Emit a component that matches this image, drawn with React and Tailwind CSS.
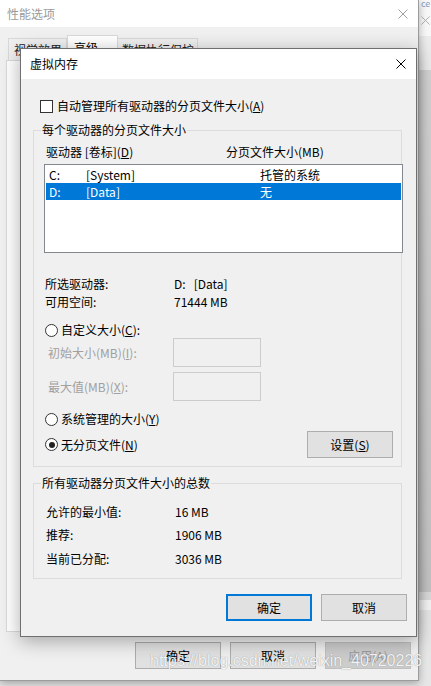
import React from "react";

const XIcon = ({ color, size = 10 }) => (
  <svg width={size} height={size} viewBox="0 0 10 10" className="block">
    <path d="M0.5 0.5L9.5 9.5M9.5 0.5L0.5 9.5" stroke={color} strokeWidth="1" fill="none" />
  </svg>
);

const Radio = ({ checked }) => (
  <div className="w-[13px] h-[13px] rounded-full border border-[#333] bg-white flex items-center justify-center shrink-0">
    {checked && <div className="w-[6px] h-[6px] rounded-full bg-[#222]" />}
  </div>
);

const Btn = ({ children, w = "w-[86px]", focus, disabled }) => (
  <div
    className={
      "h-[27px] flex items-center justify-center shrink-0 " +
      w +
      (focus
        ? " border-2 border-[#0078d7] bg-[#e1e1e1] text-black"
        : disabled
        ? " border border-[#bfbfbf] bg-[#cccccc] text-[#9a9a9a]"
        : " border border-[#adadad] bg-[#e1e1e1] text-black")
    }
  >
    {children}
  </div>
);

export default function App() {
  return (
    <div className="relative w-[431px] h-[686px] overflow-hidden bg-[#e4e4e4] font-['Noto_Sans_CJK_SC',sans-serif] text-[12px] leading-[16px] text-black">
      {/* window behind, right strip */}
      <div className="absolute left-[419px] top-0 w-[12px] h-[686px] flex flex-col">
        <div className="h-[36px] bg-[#f7f7f7] flex flex-col pl-[2px]">
          <div className="h-[12px] text-[9px] leading-[8px] text-[#8aa0c0] overflow-hidden">ce</div>
          <div className="pt-[4px]">
            <XIcon color="#a8a8a8" size={9} />
          </div>
        </div>
        <div className="h-[34px] bg-[#ebebeb]" />
        <div className="h-[522px] bg-gradient-to-b from-[#d2d2d2] to-[#c4c4c4]" />
        <div className="h-[8px] bg-[#dadada]" />
        <div className="h-[10px] bg-[#f4f4f4]" />
        <div className="flex-1 bg-[#e6e6e6]" />
      </div>

      {/* outer window: 性能选项 */}
      <div className="absolute z-0 left-0 top-0 w-[419px] h-[681px] bg-[#f0f0f0] border-r border-b border-[#9c9c9c] shadow-[0_2px_8px_rgba(0,0,0,0.3)] flex flex-col">
        <div className="h-[27px] bg-white flex items-center justify-between pl-[7px] pr-[10px] text-[#9a9a9a] shrink-0">
          <span>性能选项</span>
          <XIcon color="#a0a0a0" />
        </div>
        <div className="flex flex-col pl-[6px] pr-[6px]">
          <div className="h-[33px] flex items-end pl-[2px] pt-[8px]">
            <div className="h-[22px] w-[59px] border border-b-0 border-[#d9d9d9] bg-[#f0f0f0] pl-[5px] pt-[3px] text-[#222]">视觉效果</div>
            <div className="h-[26px] w-[51px] border border-b-0 border-[#d9d9d9] bg-white pl-[6px] pt-[4px] -mb-[1px] relative z-10">高级</div>
            <div className="h-[22px] w-[80px] border border-b-0 border-l-0 border-[#d9d9d9] bg-[#f0f0f0] pl-[4px] pt-[3px] text-[#222]">数据执行保护</div>
          </div>
          <div className="h-[572px] bg-white border border-[#d9d9d9]" />
          <div className="flex justify-end gap-[9px] mt-[10px] pr-[1px]">
            <Btn w="w-[86px]">确定</Btn>
            <Btn w="w-[86px]">取消</Btn>
            <Btn w="w-[86px]" disabled>
              应用(A)
            </Btn>
          </div>
        </div>
      </div>

      {/* inner dialog: 虚拟内存 */}
      <div className="absolute z-20 left-[20px] top-[48px] w-[397px] h-[589px] border border-[#6f6f6f] bg-[#f0f0f0] shadow-[0_4px_18px_rgba(0,0,0,0.32)] flex flex-col">
        <div className="h-[30px] bg-white flex items-center justify-between pl-[9px] pr-[10px] shrink-0">
          <span className="text-[12px]">虚拟内存</span>
          <XIcon color="#000" />
        </div>
        <div className="flex flex-col pl-[12px] pr-[9px]">
          {/* checkbox */}
          <div className="mt-[19px] h-[16px] flex items-center pl-[7px] gap-[4px]">
            <div className="w-[13px] h-[13px] border border-[#333] bg-white" />
            <span>
              自动管理所有驱动器的分页文件大小(<u>A</u>)
            </span>
          </div>

          {/* group 1 */}
          <div className="relative mt-[16px] w-[369px] h-[337px] border border-[#dcdcdc] flex flex-col">
            <span className="absolute -top-[9px] left-[7px] bg-[#f0f0f0] px-[1px]">每个驱动器的分页文件大小</span>
            <div className="mt-[13px] h-[16px] flex pl-[12px]">
              <span className="w-[180px]">
                驱动器 [卷标](<u>D</u>)
              </span>
              <span>分页文件大小(MB)</span>
            </div>
            <div className="mt-[4px] ml-[10px] w-[359px] h-[89px] border border-[#828790] bg-white p-[1px] shrink-0">
              <div className="h-[17px] flex items-center pl-[3px]">
                <span className="w-[37px]">C:</span>
                <span className="w-[174px]">[System]</span>
                <span>托管的系统</span>
              </div>
              <div className="h-[17px] flex items-center pl-[3px] bg-[#0078d7] text-white">
                <span className="w-[37px]">D:</span>
                <span className="w-[174px]">[Data]</span>
                <span>无</span>
              </div>
            </div>
            <div className="mt-[23px] h-[16px] flex pl-[11px]">
              <span className="w-[129px]">所选驱动器:</span>
              <span>D:&nbsp;&nbsp;&nbsp;[Data]</span>
            </div>
            <div className="mt-[2px] h-[16px] flex pl-[11px]">
              <span className="w-[129px]">可用空间:</span>
              <span>71444 MB</span>
            </div>
            <div className="mt-[12px] h-[16px] flex items-center pl-[11px] gap-[3px]">
              <Radio />
              <span>
                自定义大小(<u>C</u>):
              </span>
            </div>
            <div className="h-[29px] flex items-center pl-[14px]">
              <span className="w-[125px] text-[#a0a0a0]">
                初始大小(MB)(<u>I</u>):
              </span>
              <div className="w-[88px] h-[29px] border border-[#cccccc] bg-[#f0f0f0]" />
            </div>
            <div className="mt-[5px] h-[29px] flex items-center pl-[14px]">
              <span className="w-[125px] text-[#a0a0a0]">
                最大值(MB)(<u>X</u>):
              </span>
              <div className="w-[88px] h-[29px] border border-[#cccccc] bg-[#f0f0f0]" />
            </div>
            <div className="mt-[10px] h-[16px] flex items-center pl-[11px] gap-[3px]">
              <Radio />
              <span>
                系统管理的大小(<u>Y</u>)
              </span>
            </div>
            <div className="mt-[4px] h-[27px] flex items-center justify-between pl-[11px] pr-[8px]">
              <div className="flex items-center gap-[3px]">
                <Radio checked />
                <span>
                  无分页文件(<u>N</u>)
                </span>
              </div>
              <Btn w="w-[86px]">
                设置(<u>S</u>)
              </Btn>
            </div>
          </div>

          {/* group 2 */}
          <div className="relative mt-[16px] w-[369px] h-[96px] border border-[#dcdcdc] flex flex-col">
            <span className="absolute -top-[9px] left-[7px] bg-[#f0f0f0] px-[1px]">所有驱动器分页文件大小的总数</span>
            <div className="mt-[20px] h-[16px] flex pl-[12px]">
              <span className="w-[129px]">允许的最小值:</span>
              <span>16 MB</span>
            </div>
            <div className="mt-[7px] h-[16px] flex pl-[12px]">
              <span className="w-[129px]">推荐:</span>
              <span>1906 MB</span>
            </div>
            <div className="mt-[8px] h-[16px] flex pl-[12px]">
              <span className="w-[129px]">当前已分配:</span>
              <span>3036 MB</span>
            </div>
          </div>

          {/* buttons */}
          <div className="mt-[15px] flex justify-end gap-[9px]">
            <Btn focus>确定</Btn>
            <Btn>取消</Btn>
          </div>
        </div>
      </div>

      {/* watermark */}
      <div className="absolute z-30 left-[150px] top-[650px] text-[16px] leading-[22px] font-['Liberation_Sans',sans-serif] text-white/90 [text-shadow:0_0_1px_rgba(0,0,0,0.45)] whitespace-nowrap">
        https://blog.csdn.net/weixin_40720226
      </div>
    </div>
  );
}
